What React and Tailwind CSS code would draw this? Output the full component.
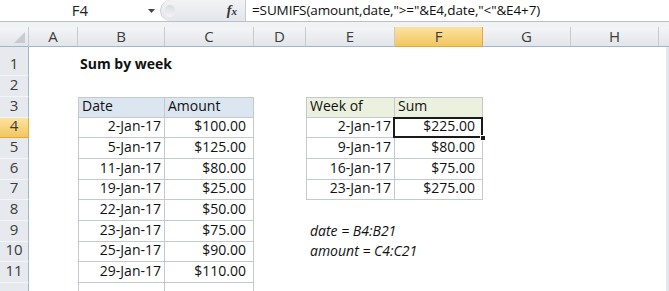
import React from 'react'

const cols = ['A', 'B', 'C', 'D', 'E', 'F', 'G', 'H']

const dates = ['2-Jan-17', '5-Jan-17', '11-Jan-17', '19-Jan-17', '22-Jan-17', '23-Jan-17', '25-Jan-17', '29-Jan-17', '']
const amounts = ['$100.00', '$125.00', '$80.00', '$25.00', '$50.00', '$75.00', '$90.00', '$110.00', '']
const weeks = ['2-Jan-17', '9-Jan-17', '16-Jan-17', '23-Jan-17']
const sums = ['$225.00', '$80.00', '$75.00', '$275.00']

const rowNums = [1, 2, 3, 4, 5, 6, 7, 8, 9, 10, 11, 12]

function ColHeader({ label, active }) {
  if (active) {
    return (
      <div className="flex items-center justify-center border-r border-b border-[#e3a93a] bg-gradient-to-b from-[#fbe3a0] to-[#f3c65f] text-[15px] text-[#3c3c3c]">
        {label}
      </div>
    )
  }
  return (
    <div className="flex items-center justify-center border-r border-b border-r-[#c5cbd3] border-b-[#9eb6ce] bg-gradient-to-b from-[#f4f5f7] to-[#e2e5e9] text-[15px] text-[#3c3c3c]">
      {label}
    </div>
  )
}

function RowHeader({ n }) {
  if (n === 4) {
    return (
      <div className="flex items-end justify-center pb-[1px] border-r border-b border-r-[#e3a93a] border-b-[#e3a93a] bg-gradient-to-b from-[#fbe3a0] to-[#f3c65f] text-[15px] text-[#3c3c3c]">
        {n}
      </div>
    )
  }
  return (
    <div className="flex items-end justify-center pb-[1px] border-r border-b border-r-[#9eb6ce] border-b-[#f4f5f7] bg-[#e6e9ed] text-[15px] text-[#3c3c3c]">
      {n < 12 ? n : ''}
    </div>
  )
}

function Cell({ children, kind }) {
  if (kind === 'money') {
    return <div className="flex items-end justify-end pr-[7px] pb-[1px] border-r border-b border-[#c4c9d0] whitespace-nowrap">{children}</div>
  }
  if (kind === 'title') {
    return <div className="flex items-end pl-[2px] pb-[2px] font-bold whitespace-nowrap">{children}</div>
  }
  if (kind === 'note') {
    return <div className="flex items-end pl-[4px] pb-[1px] italic whitespace-nowrap">{children}</div>
  }
  return <div />
}

function Selected({ children }) {
  return (
    <div className="relative flex items-end justify-end pr-[7px] pb-[1px] border-r border-b border-[#c4c9d0] whitespace-nowrap">
      {children}
      <div className="absolute -left-[2px] -top-[1px] -right-[1px] -bottom-[1px] border-2 border-[#1a1a1a]" />
      <div className="absolute -right-[4px] -bottom-[4px] w-[6px] h-[6px] bg-[#1a1a1a] border border-white" />
    </div>
  )
}

function rowCells(n) {
  const i = n - 4
  const c = []
  c.push(<Cell key="A" kind="empty" />)
  if (n === 1) {
    c.push(<Cell key="B" kind="title">Sum by week</Cell>)
    c.push(<Cell key="C" kind="empty" />)
  } else if (n === 3) {
    c.push(<div key="B" className="flex items-end pl-[3px] pb-[1px] border-l border-t border-r border-b border-[#c4c9d0] bg-[#dce6f1]">Date</div>)
    c.push(<div key="C" className="flex items-end pl-[3px] pb-[1px] border-t border-r border-b border-[#c4c9d0] bg-[#dce6f1]">Amount</div>)
  } else if (n >= 4) {
    c.push(<div key="B" className="flex items-end justify-end pr-[3px] pb-[1px] border-l border-r border-b border-[#c4c9d0] whitespace-nowrap">{dates[i]}</div>)
    c.push(<Cell key="C" kind="money">{amounts[i]}</Cell>)
  } else {
    c.push(<Cell key="B" kind="empty" />)
    c.push(<Cell key="C" kind="empty" />)
  }
  c.push(<Cell key="D" kind="empty" />)
  if (n === 3) {
    c.push(<div key="E" className="flex items-end pl-[3px] pb-[1px] border-l border-t border-r border-b border-[#c4c9d0] bg-[#ebf1de]">Week of</div>)
    c.push(<div key="F" className="flex items-end pl-[3px] pb-[1px] border-t border-r border-b border-[#c4c9d0] bg-[#ebf1de]">Sum</div>)
  } else if (n >= 4 && n <= 7) {
    c.push(<div key="E" className="flex items-end justify-end pr-[3px] pb-[1px] border-l border-r border-b border-[#c4c9d0] whitespace-nowrap">{weeks[i]}</div>)
    if (n === 4) c.push(<Selected key="F">{sums[i]}</Selected>)
    else c.push(<Cell key="F" kind="money">{sums[i]}</Cell>)
  } else if (n === 9) {
    c.push(<Cell key="E" kind="note">date = B4:B21</Cell>)
    c.push(<Cell key="F" kind="empty" />)
  } else if (n === 10) {
    c.push(<Cell key="E" kind="note">amount = C4:C21</Cell>)
    c.push(<Cell key="F" kind="empty" />)
  } else {
    c.push(<Cell key="E" kind="empty" />)
    c.push(<Cell key="F" kind="empty" />)
  }
  c.push(<Cell key="G" kind="empty" />)
  c.push(<Cell key="H" kind="empty" />)
  c.push(<div key="S" className="border-r-[3px] border-[#e4e7eb]" />)
  return c
}

export default function App() {
  return (
    <div className="w-[669px] h-[291px] overflow-hidden bg-white font-['Open_Sans',sans-serif] text-[14px] text-[#111]">
      {/* formula bar */}
      <div className="flex h-[22px] border-b border-[#b9c0c9] bg-white">
        <div className="relative flex w-[160px] items-center justify-center text-[15px] text-[#222]">
          F4
          <svg className="absolute right-[5px] top-[9px]" width="7" height="4" viewBox="0 0 7 4">
            <path d="M0 0h7L3.5 4z" fill="#444" />
          </svg>
        </div>
        <div className="flex w-[85px] items-center justify-end rounded-l-[11px] border-l border-[#c6ccd3] bg-gradient-to-b from-[#f2f3f5] to-[#e3e6ea] pr-[8px]">
          <div className="mr-auto ml-[4px] h-[12px] w-[10px] rounded-full bg-gradient-to-b from-[#d7dbe0] to-[#f4f5f7]" />
          <span className="font-['Liberation_Serif',serif] italic font-bold text-[14px] text-[#333]">f<span className="text-[11px]">x</span></span>
        </div>
        <div className="flex flex-1 items-center border-l border-[#c6ccd3] pl-[6px] text-[13.5px] tracking-[-0.12px] text-[#111] whitespace-nowrap">
          =SUMIFS(amount,date,"&gt;="&amp;E4,date,"&lt;"&amp;E4+7)
        </div>
      </div>
      <div className="h-[5px] bg-[#f0f2f4]" />
      {/* sheet */}
      <div className="grid grid-cols-[29px_49px_87px_89px_52px_89px_88px_88px_88px_10px] grid-rows-[20px_29px_21px_21px_20px_21px_21px_20px_21px_21px_20px_21px_21px]">
        <div className="relative border-r border-b border-r-[#c5cbd3] border-b-[#9eb6ce] bg-gradient-to-b from-[#f4f5f7] to-[#e2e5e9]">
          <svg className="absolute right-[3px] bottom-[3px]" width="11" height="11" viewBox="0 0 11 11">
            <path d="M11 0V11H0z" fill="#c8ccd2" />
          </svg>
        </div>
        {cols.map((l) => (
          <ColHeader key={l} label={l} active={l === 'F'} />
        ))}
        <div className="border-b border-b-[#9eb6ce] bg-gradient-to-b from-[#f4f5f7] to-[#e2e5e9]" />
        {rowNums.map((n) => (
          <React.Fragment key={n}>
            <RowHeader n={n} />
            {rowCells(n)}
          </React.Fragment>
        ))}
      </div>
    </div>
  )
}
